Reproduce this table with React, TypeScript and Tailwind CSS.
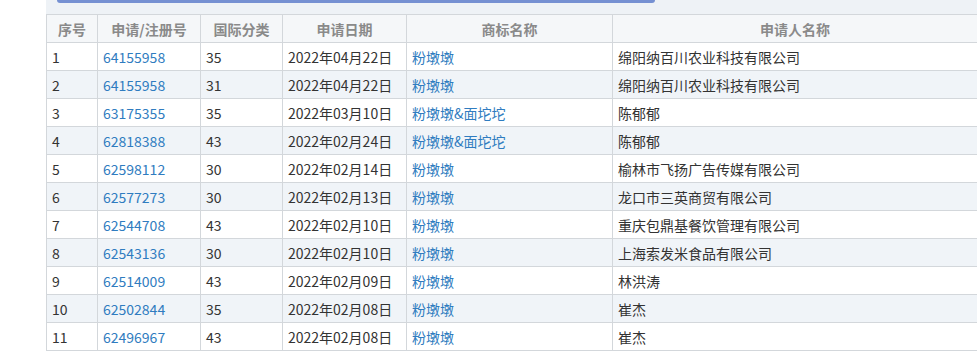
import React from "react";

const rows = [
  ["1", "64155958", "35", "2022年04月22日", "粉墩墩", "绵阳纳百川农业科技有限公司"],
  ["2", "64155958", "31", "2022年04月22日", "粉墩墩", "绵阳纳百川农业科技有限公司"],
  ["3", "63175355", "35", "2022年03月10日", "粉墩墩&面坨坨", "陈郁郁"],
  ["4", "62818388", "43", "2022年02月24日", "粉墩墩&面坨坨", "陈郁郁"],
  ["5", "62598112", "30", "2022年02月14日", "粉墩墩", "榆林市飞扬广告传媒有限公司"],
  ["6", "62577273", "30", "2022年02月13日", "粉墩墩", "龙口市三英商贸有限公司"],
  ["7", "62544708", "43", "2022年02月10日", "粉墩墩", "重庆包鼎基餐饮管理有限公司"],
  ["8", "62543136", "30", "2022年02月10日", "粉墩墩", "上海索发米食品有限公司"],
  ["9", "62514009", "43", "2022年02月09日", "粉墩墩", "林洪涛"],
  ["10", "62502844", "35", "2022年02月08日", "粉墩墩", "崔杰"],
  ["11", "62496967", "43", "2022年02月08日", "粉墩墩", "崔杰"],
];

const headers = ["序号", "申请/注册号", "国际分类", "申请日期", "商标名称", "申请人名称"];
const cols = "grid grid-cols-[51px_103px_82px_124px_206px_1fr]";

export default function App() {
  return (
    <div
      className="w-[977px] h-[351px] overflow-hidden bg-white flex"
      style={{ fontFamily: '"Noto Sans CJK SC", "Microsoft YaHei", sans-serif' }}
    >
      <div className="w-[46px] shrink-0 bg-white" />
      <div className="flex-1 flex flex-col">
        <div className="h-[14px] bg-[#eef2f6] pl-[11px]">
          <div className="w-[598px] h-[3px] bg-[#7590d2] rounded-b-[3px]" />
        </div>
        <div className={`${cols} h-[29px] border-y border-[#d3d7db] bg-[#f5f7f9] text-[14px] font-bold text-[#8a8a8a]`}>
          {headers.map((h, i) => (
            <div key={i} className="border-l border-[#d3d7db] flex items-center justify-center leading-none">
              {h}
            </div>
          ))}
        </div>
        {rows.map((r, ri) => (
          <div
            key={ri}
            className={`${cols} h-[28px] border-b border-[#d3d7db] text-[14px] text-[#333] ${ri % 2 === 1 ? "bg-[#f0f4f8]" : "bg-white"}`}
          >
            {r.map((c, ci) => (
              <div
                key={ci}
                className={`border-l border-[#d3d7db] flex items-center pl-[5px] leading-none whitespace-nowrap ${ci === 1 || ci === 4 ? "text-[#2f7cc0]" : ""}`}
              >
                {c}
              </div>
            ))}
          </div>
        ))}
      </div>
    </div>
  );
}
